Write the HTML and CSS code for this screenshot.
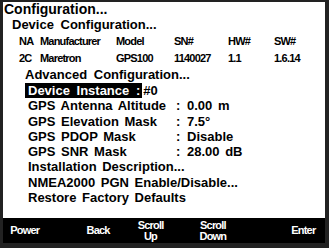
FILE: index.html
```html
<!DOCTYPE html>
<html lang="en">
<head>
  <meta charset="UTF-8">
  <title>Advanced Configuration</title>
  <link rel="stylesheet" href="styles.css">
</head>
<body>
  <div class="frame">
    <div class="screen">
      <div class="title">Configuration...</div>
      <div class="subtitle">Device Configuration...</div>

      <div class="device-row head">
        <span class="c-na">NA</span>
        <span class="c-mfr">Manufacturer</span>
        <span class="c-model">Model</span>
        <span class="c-sn">SN#</span>
        <span class="c-hw">HW#</span>
        <span class="c-sw">SW#</span>
      </div>
      <div class="device-row">
        <span class="c-na">2C</span>
        <span class="c-mfr">Maretron</span>
        <span class="c-model">GPS100</span>
        <span class="c-sn">1140027</span>
        <span class="c-hw">1.1</span>
        <span class="c-sw">1.6.14</span>
      </div>

      <div class="section">Advanced Configuration...</div>

      <ul class="menu">
        <li class="item"><span class="selected">Device Instance :</span>#0</li>
        <li class="item"><span class="label">GPS Antenna Altitude</span><span class="colon">:</span>0.00 m</li>
        <li class="item"><span class="label">GPS Elevation Mask</span><span class="colon">:</span>7.5&deg;</li>
        <li class="item"><span class="label">GPS PDOP Mask</span><span class="colon">:</span>Disable</li>
        <li class="item"><span class="label">GPS SNR Mask</span><span class="colon">:</span>28.00 dB</li>
        <li class="item">Installation Description...</li>
        <li class="item">NMEA2000 PGN Enable/Disable...</li>
        <li class="item">Restore Factory Defaults</li>
      </ul>
    </div>

    <div class="softkeys">
      <div class="key">Power</div>
      <div class="key key-back">Back</div>
      <div class="key key-up">Scroll<br>Up</div>
      <div class="key key-down">Scroll<br>Down</div>
      <div class="key key-enter">Enter</div>
    </div>
  </div>
</body>
</html>
```

FILE: styles.css
```css
body {
  margin: 0;
  background-color: #111;
  font-family: "Liberation Sans", Arial, sans-serif;
  font-weight: bold;
  color: #000;
}
.frame {
  width: 329px;
  height: 248px;
  box-sizing: border-box;
  padding: 2px 4px 5px 3px;
  background: #222;
  display: flex;
  flex-direction: column;
}
.screen {
  background: #fff;
  height: 216px;
  overflow: hidden;
}
.title {
  font-size: 14px;
  line-height: 15px;
  padding-left: 1px;
}
.subtitle {
  font-size: 13px;
  line-height: 15px;
  padding-left: 9px;
  word-spacing: 3px;
}
.device-row {
  display: flex;
  font-size: 11px;
  line-height: 16px;
  letter-spacing: -0.8px;
  margin-top: 1px;
}
.device-row span {
  display: block;
}
.c-na { width: 21px; margin-left: 16px; }
.c-mfr { width: 76px; }
.c-model { width: 58px; }
.c-sn { width: 54px; }
.c-hw { width: 46px; }
.c-sw { width: 40px; }
.section {
  font-size: 13px;
  line-height: 16px;
  padding-left: 22px;
  word-spacing: 3px;
  margin-top: 1px;
}
.menu {
  list-style: none;
  margin: 0;
  padding: 0 0 0 25px;
}
.item {
  display: flex;
  font-size: 13px;
  line-height: 15.3px;
  word-spacing: 2px;
  white-space: nowrap;
}
.selected {
  background: #000;
  color: #fff;
  margin-left: -3px;
  padding: 0 2px 0 3px;
  margin-right: 1px;
  word-spacing: 3px;
}
.label {
  width: 148px;
}
.colon {
  width: 11px;
}
.softkeys {
  display: flex;
  background: #000;
  color: #fff;
  height: 25px;
  font-size: 11px;
  line-height: 11px;
  letter-spacing: -0.8px;
  align-items: center;
}
.key {
  width: 44px;
  text-align: center;
}
.key-back { margin-left: 30px; }
.key-up { margin-left: 9px; }
.key-down { margin-left: 19px; }
.key-enter { margin-left: 47px; }
```
